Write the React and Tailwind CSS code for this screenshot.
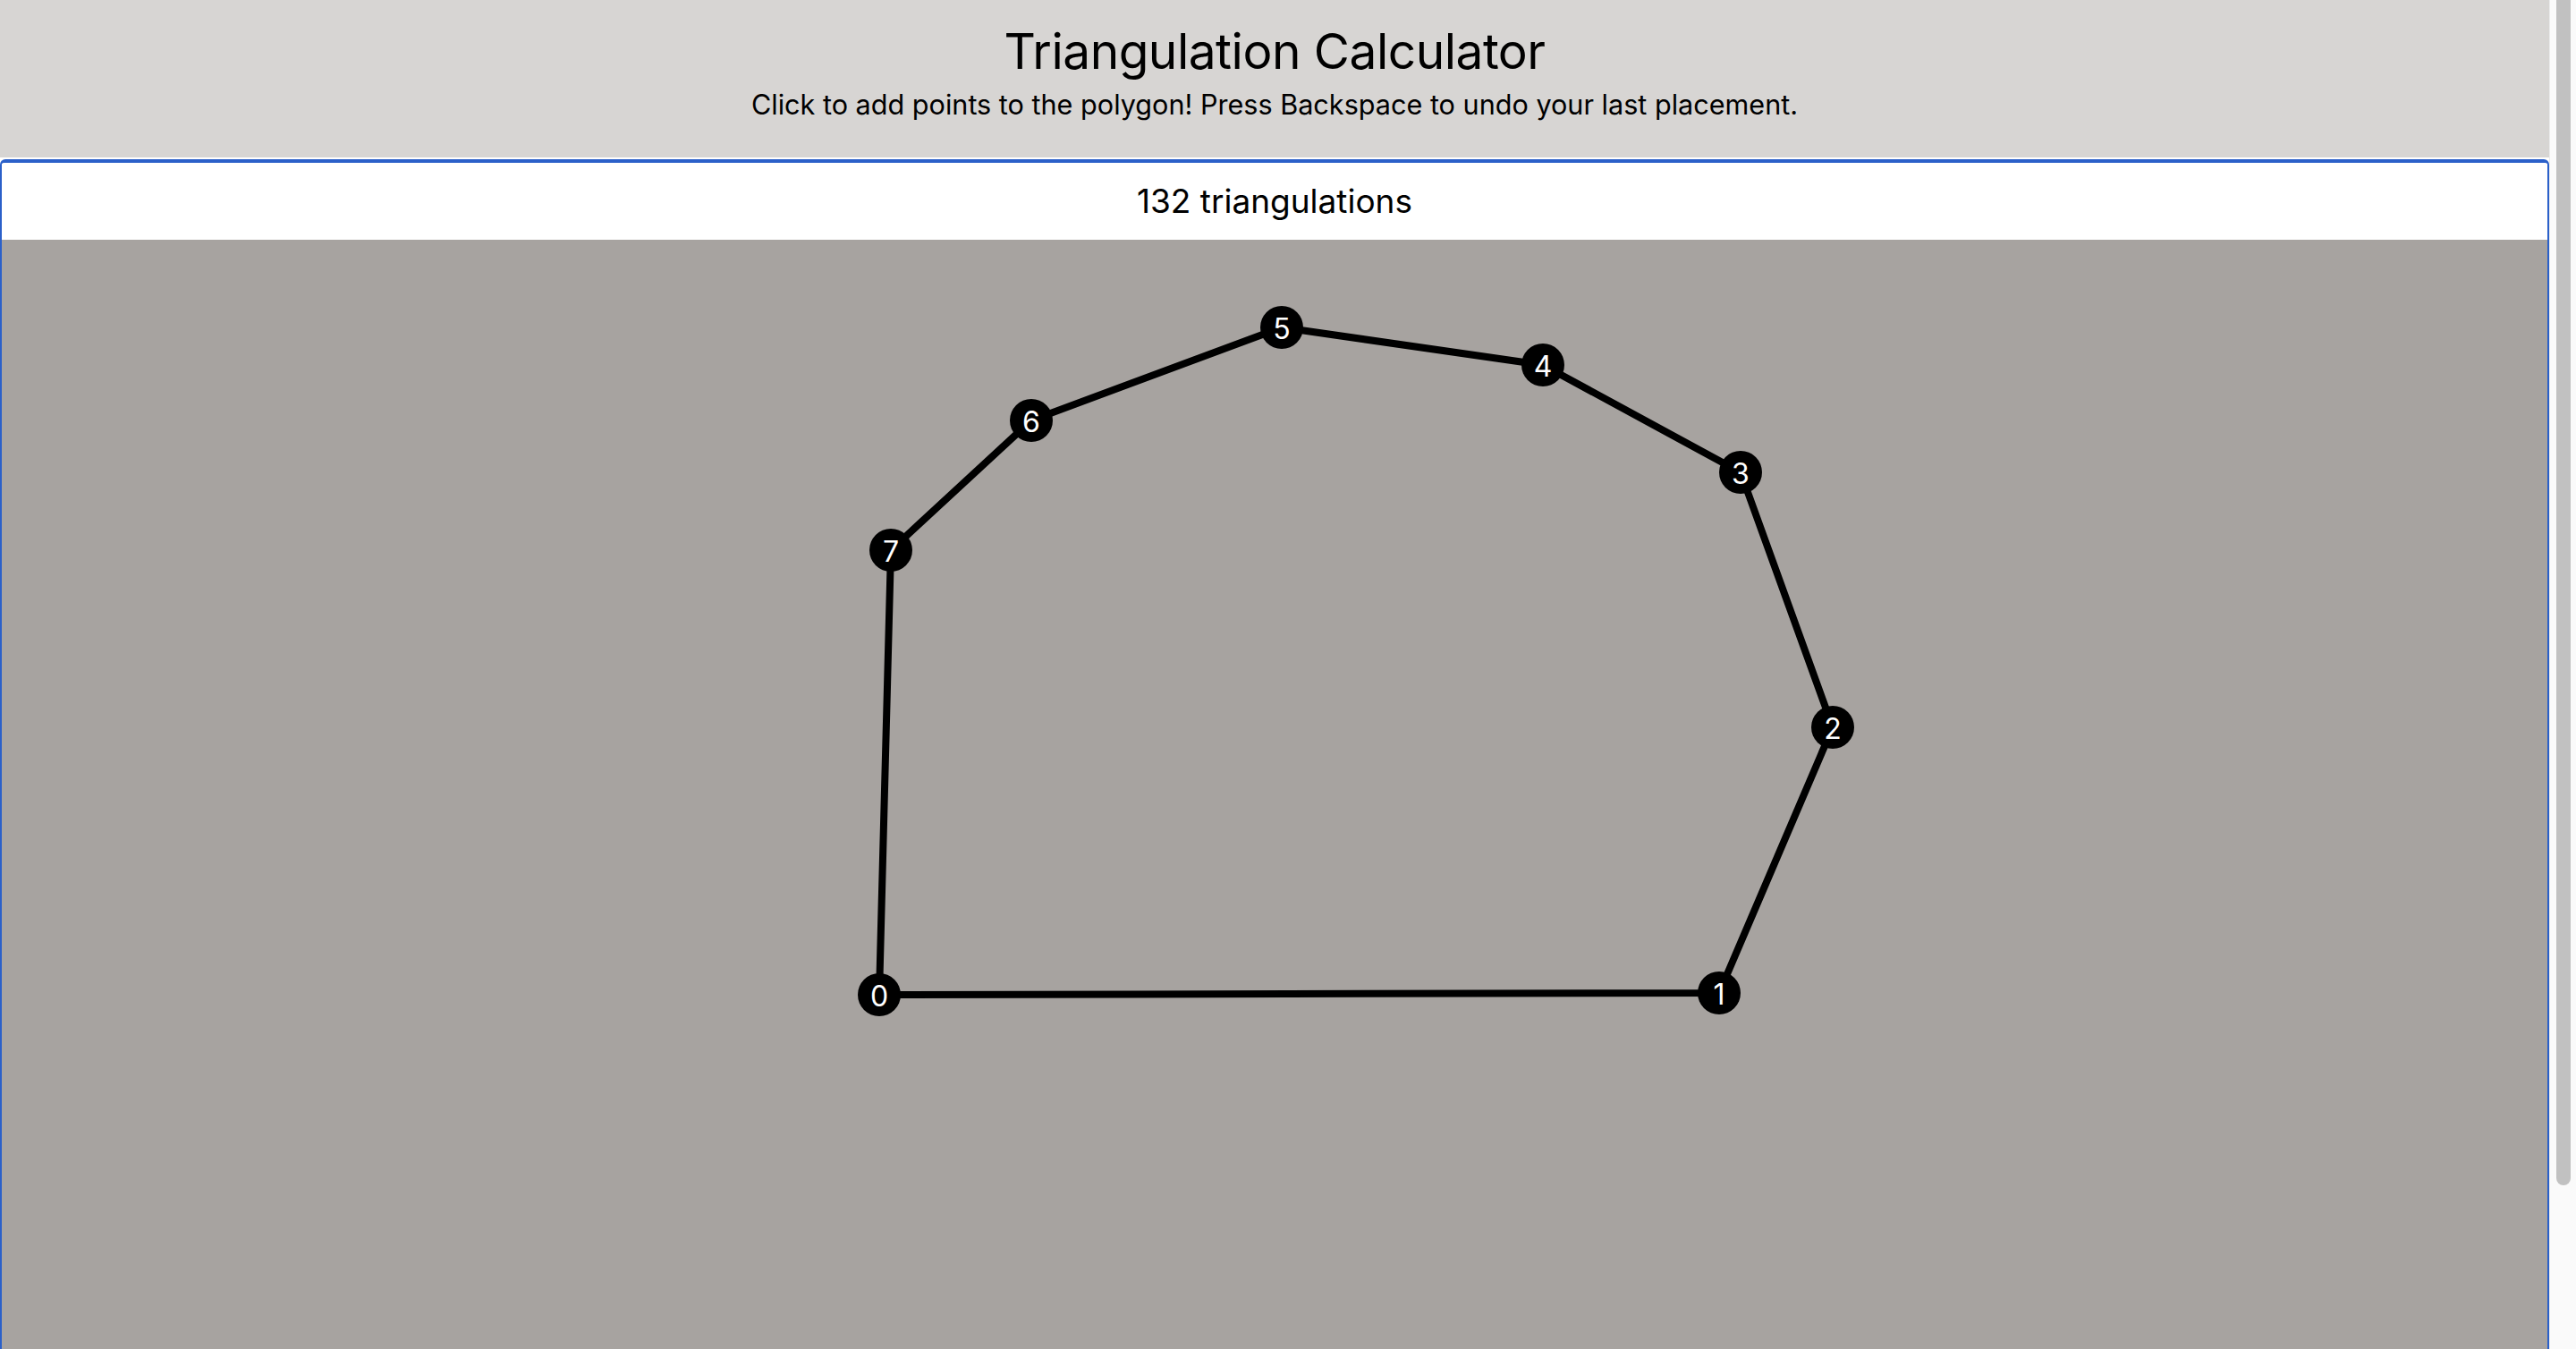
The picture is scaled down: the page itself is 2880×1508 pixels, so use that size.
import React from 'react';

const points = [
    [981, 844],
    [1920, 842],
    [2047, 545],
    [1944, 260],
    [1723, 140],
    [1431, 98],
    [1151, 202],
    [994, 347],
];

const PolygonCanvas = () => {
    const outline = points.map(([x, y]) => `${x},${y}`).join(' ');
    return (
        <svg className="block h-full w-full" viewBox="0 0 2846 1240" preserveAspectRatio="xMinYMin slice">
            <polygon points={outline} fill="none" stroke="#000" strokeWidth="8" strokeLinejoin="round" />
            {points.map(([x, y], i) => (
                <g key={i}>
                    <circle cx={x} cy={y} r="24" fill="#000" />
                    <text
                        x={x}
                        y={y + 1}
                        fill="#fff"
                        fontSize="32"
                        fontFamily="Inter, 'Liberation Sans', sans-serif"
                        textAnchor="middle"
                        dominantBaseline="central"
                    >
                        {i}
                    </text>
                </g>
            ))}
        </svg>
    );
};

const App = () => {
    return (
        <div className="flex h-screen w-full overflow-hidden bg-white font-['Inter','Liberation_Sans',sans-serif] text-black">
            <div className="flex min-w-0 flex-1 flex-col">
                <header className="flex h-[176px] shrink-0 flex-col items-center bg-[#d7d5d3] pt-[22px]">
                    <h1 className="text-[55px] leading-[70px] font-normal tracking-[-0.5px]">Triangulation Calculator</h1>
                    <p className="mt-[5px] text-[30.6px] leading-[40px]">
                        Click to add points to the polygon! Press Backspace to undo your last placement.
                    </p>
                </header>
                <div className="mt-[2px] flex min-h-0 flex-1 flex-col overflow-hidden rounded-t-[6px] border-x-2 border-t-4 border-[#2b60c9]">
                    <div className="flex h-[86px] shrink-0 items-center justify-center bg-white text-[37px]">
                        132 triangulations
                    </div>
                    <div className="min-h-0 flex-1 bg-[#a7a3a0]">
                        <PolygonCanvas />
                    </div>
                </div>
            </div>
            <div className="flex w-[30px] shrink-0 border-l border-[#ececec] bg-[#fafafa] pl-[7px]">
                <div className="h-[1325px] w-4 rounded-b-full bg-[#c1c1c1]" />
            </div>
        </div>
    );
};

export default App;
